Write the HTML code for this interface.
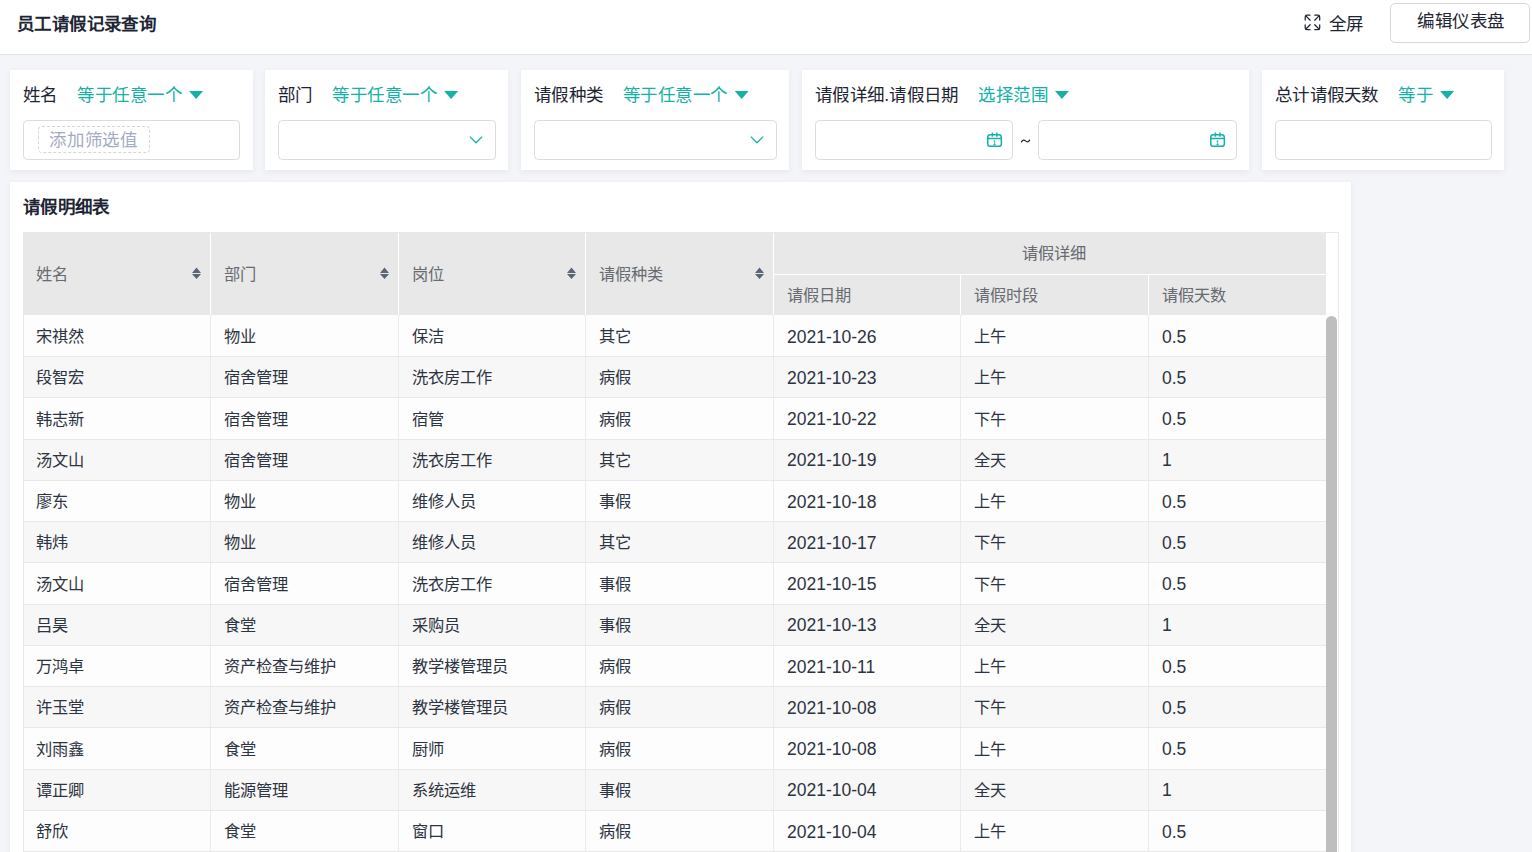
<!DOCTYPE html>
<html lang="zh-CN">
<head>
<meta charset="utf-8">
<style>
*{box-sizing:border-box;margin:0;padding:0}
html,body{width:1532px;height:852px;overflow:hidden}
body{background:#f4f5f9;font-family:"Liberation Sans",sans-serif;font-size:17.5px;color:#1f2533;position:relative}
.abs{position:absolute}
.t{position:absolute;white-space:nowrap;line-height:20px}
#hdr{left:0;top:0;width:1532px;height:55px;background:#fff;border-bottom:1px solid #e1e3e8}
#title{left:17px;top:13.5px;font-weight:bold;color:#1d2433;letter-spacing:0.4px}
#fs{left:1328.5px;top:14px;color:#1d2433;letter-spacing:0.8px}
#btn{left:1390px;top:3px;width:140px;height:40px;border:1px solid #d8d8da;border-radius:5px;background:#fff}
#btn span{position:absolute;left:26px;top:7px;line-height:20px;color:#1d2433;letter-spacing:0.5px}
.card{position:absolute;top:70px;height:100px;background:#fff;box-shadow:0 2px 6px rgba(40,50,90,0.07)}
.lab{position:absolute;left:13px;top:14.7px;line-height:20px;color:#1d2433;white-space:nowrap;letter-spacing:0.3px}
.op{color:#14b1a6;margin-left:19.5px;letter-spacing:0.55px}
.tri{display:inline-block;width:14px;height:8px;margin-left:6.7px;vertical-align:middle;position:relative;top:-1px;background:#14b1a6;clip-path:polygon(0 0,100% 0,50% 100%)}
.inp{position:absolute;top:50px;height:40px;border:1px solid #dadbdd;border-radius:4.5px;background:#fff}
#tcard{left:10px;top:182px;width:1341px;height:700px;background:#fff;box-shadow:0 2px 6px rgba(40,50,90,0.07)}
#ttl{left:13px;top:15px;font-weight:bold;color:#1d2433;letter-spacing:0.3px}
#tbl{position:absolute;left:23px;top:232px;width:1316px;height:640px;border:1px solid #e8e8e8;background:#fff}
.hc{position:absolute;background:#e8e8e8;color:#676a70;white-space:nowrap;font-size:16.25px}
.hc span{position:absolute;left:13px;line-height:20px}
.sort{position:absolute;width:9px;height:12px}
.row{position:absolute;left:0;width:1302px;height:41.25px;border-bottom:1px solid #e8e8e8}
.row.o{background:#fdfdfd}
.row.e{background:#f7f7f7}
.c{position:absolute;top:0;height:100%;line-height:20px;white-space:nowrap;border-left:1px solid #ebebeb;font-size:16.25px;color:#2c3341}
.n{font-size:17.5px}
</style>
</head>
<body>
<div id="hdr" class="abs">
  <div id="title" class="t">员工请假记录查询</div>
  <svg class="abs" style="left:1304px;top:14px" width="17" height="17" viewBox="0 0 17 17" fill="none" stroke="#1d2433" stroke-width="1.25" stroke-linecap="round" stroke-linejoin="round">
    <path d="M1.2 6V2.9Q1.2 1.2 2.9 1.2H6M1.6 1.6L6.2 6.2"/><path d="M10.8 1.2H14Q15.7 1.2 15.7 2.9V6M15.3 1.6L10.7 6.2"/><path d="M1.2 10.8V14Q1.2 15.7 2.9 15.7H6M1.6 15.3L6.2 10.7"/><path d="M15.7 10.8V14Q15.7 15.7 14 15.7H10.8M15.3 15.3L10.7 10.7"/>
  </svg>
  <div id="fs" class="t">全屏</div>
  <div id="btn" class="abs"><span>编辑仪表盘</span></div>
</div>

<div class="card" style="left:10px;width:243px">
  <div class="lab">姓名<span class="op">等于任意一个</span><i class="tri"></i></div>
  <div class="inp" style="left:13px;width:217px">
    <div class="abs" style="left:14px;top:5px;width:112px;height:27px;border:1px dashed #d5d6d9;border-radius:4px"></div>
    <div class="t" style="left:25px;top:9px;color:#a3acbf;letter-spacing:0.75px">添加筛选值</div>
  </div>
</div>
<div class="card" style="left:265px;width:243px">
  <div class="lab">部门<span class="op">等于任意一个</span><i class="tri"></i></div>
  <div class="inp" style="left:13px;width:218px">
    <svg class="abs" style="left:189px;top:13px" width="16" height="12" viewBox="0 0 16 12"><path d="M1.8 2.6l6.2 6.2 6.2-6.2" fill="none" stroke="#14b1a6" stroke-width="1.3"/></svg>
  </div>
</div>
<div class="card" style="left:521px;width:268px">
  <div class="lab">请假种类<span class="op">等于任意一个</span><i class="tri"></i></div>
  <div class="inp" style="left:13px;width:243px">
    <svg class="abs" style="left:214px;top:13px" width="16" height="12" viewBox="0 0 16 12"><path d="M1.8 2.6l6.2 6.2 6.2-6.2" fill="none" stroke="#14b1a6" stroke-width="1.3"/></svg>
  </div>
</div>
<div class="card" style="left:802px;width:447px">
  <div class="lab">请假详细.请假日期<span class="op">选择范围</span><i class="tri"></i></div>
  <div class="inp" style="left:13px;width:198px">
    <svg class="abs" style="left:170.5px;top:10.5px" width="17" height="18" viewBox="0 0 17 18" fill="none" stroke="#14b1a6" stroke-width="1.5"><rect x="0.75" y="2.75" width="13.6" height="11.6" rx="2.6"/><path d="M0.75 6.4h13.6M5.4 0.6v4.2M9.9 0.6v4.2"/><path d="M6.5 9.2l1.2-.6v4.2M6.2 12.8h2.8" stroke-width="0.9"/></svg>
  </div>
  <svg class="abs" style="left:218px;top:68px" width="11" height="6" viewBox="0 0 11 6"><path d="M1.5 3.9C2.6 1.8 4 1.6 5.5 2.9S8.4 4.2 9.6 2.1" fill="none" stroke="#1d2433" stroke-width="1.2" stroke-linecap="round"/></svg>
  <div class="inp" style="left:236px;width:199px">
    <svg class="abs" style="left:170.5px;top:10.5px" width="17" height="18" viewBox="0 0 17 18" fill="none" stroke="#14b1a6" stroke-width="1.5"><rect x="0.75" y="2.75" width="13.6" height="11.6" rx="2.6"/><path d="M0.75 6.4h13.6M5.4 0.6v4.2M9.9 0.6v4.2"/><path d="M6.5 9.2l1.2-.6v4.2M6.2 12.8h2.8" stroke-width="0.9"/></svg>
  </div>
</div>
<div class="card" style="left:1262px;width:242px">
  <div class="lab">总计请假天数<span class="op">等于</span><i class="tri"></i></div>
  <div class="inp" style="left:13px;width:217px"></div>
</div>

<div id="tcard" class="abs">
  <div id="ttl" class="t">请假明细表</div>
</div>
<div id="tbl">
<div class="hc" style="left:0px;top:0;width:186px;height:82px"><span style="top:31px;left:12px">姓名</span></div>
<svg class="sort" style="left:168px;top:34px" width="9" height="12" viewBox="0 0 9 12"><path d="M4.5 0.4L9 5.9H0z M0 7h9L4.5 12z" fill="#5a6577"/></svg>
<div class="hc" style="left:187px;top:0;width:187px;height:82px"><span style="top:31px;left:13px">部门</span></div>
<svg class="sort" style="left:356px;top:34px" width="9" height="12" viewBox="0 0 9 12"><path d="M4.5 0.4L9 5.9H0z M0 7h9L4.5 12z" fill="#5a6577"/></svg>
<div class="hc" style="left:375px;top:0;width:186px;height:82px"><span style="top:31px;left:13px">岗位</span></div>
<svg class="sort" style="left:543px;top:34px" width="9" height="12" viewBox="0 0 9 12"><path d="M4.5 0.4L9 5.9H0z M0 7h9L4.5 12z" fill="#5a6577"/></svg>
<div class="hc" style="left:562px;top:0;width:187px;height:82px"><span style="top:31px;left:13px">请假种类</span></div>
<svg class="sort" style="left:731px;top:34px" width="9" height="12" viewBox="0 0 9 12"><path d="M4.5 0.4L9 5.9H0z M0 7h9L4.5 12z" fill="#5a6577"/></svg>
<div class="hc" style="left:750px;top:0;width:552px;height:41px"><span style="left:0;width:559px;text-align:center;top:10px">请假详细</span></div>
<div class="hc" style="left:750px;top:42px;width:186px;height:40px"><span style="top:10px">请假日期</span></div>
<div class="hc" style="left:937px;top:42px;width:187px;height:40px"><span style="top:10px">请假时段</span></div>
<div class="hc" style="left:1125px;top:42px;width:177px;height:40px"><span style="top:10px">请假天数</span></div>
<div class="row o" style="top:82px;height:42px"><div class="c" style="border-left:0;left:0px;width:186px"><span style="position:absolute;left:12px;top:11px">宋祺然</span></div><div class="c" style="left:186px;width:188px"><span style="position:absolute;left:13px;top:11px">物业</span></div><div class="c" style="left:374px;width:187px"><span style="position:absolute;left:13px;top:11px">保洁</span></div><div class="c" style="left:561px;width:188px"><span style="position:absolute;left:13px;top:11px">其它</span></div><div class="c n" style="left:749px;width:187px"><span style="position:absolute;left:13px;top:12px">2021-10-26</span></div><div class="c" style="left:936px;width:188px"><span style="position:absolute;left:13px;top:11px">上午</span></div><div class="c n" style="left:1124px;width:178px"><span style="position:absolute;left:13px;top:12px">0.5</span></div></div>
<div class="row e" style="top:124px;height:41px"><div class="c" style="border-left:0;left:0px;width:186px"><span style="position:absolute;left:12px;top:10px">段智宏</span></div><div class="c" style="left:186px;width:188px"><span style="position:absolute;left:13px;top:10px">宿舍管理</span></div><div class="c" style="left:374px;width:187px"><span style="position:absolute;left:13px;top:10px">洗衣房工作</span></div><div class="c" style="left:561px;width:188px"><span style="position:absolute;left:13px;top:10px">病假</span></div><div class="c n" style="left:749px;width:187px"><span style="position:absolute;left:13px;top:11px">2021-10-23</span></div><div class="c" style="left:936px;width:188px"><span style="position:absolute;left:13px;top:10px">上午</span></div><div class="c n" style="left:1124px;width:178px"><span style="position:absolute;left:13px;top:11px">0.5</span></div></div>
<div class="row o" style="top:165px;height:42px"><div class="c" style="border-left:0;left:0px;width:186px"><span style="position:absolute;left:12px;top:11px">韩志新</span></div><div class="c" style="left:186px;width:188px"><span style="position:absolute;left:13px;top:11px">宿舍管理</span></div><div class="c" style="left:374px;width:187px"><span style="position:absolute;left:13px;top:11px">宿管</span></div><div class="c" style="left:561px;width:188px"><span style="position:absolute;left:13px;top:11px">病假</span></div><div class="c n" style="left:749px;width:187px"><span style="position:absolute;left:13px;top:11px">2021-10-22</span></div><div class="c" style="left:936px;width:188px"><span style="position:absolute;left:13px;top:11px">下午</span></div><div class="c n" style="left:1124px;width:178px"><span style="position:absolute;left:13px;top:11px">0.5</span></div></div>
<div class="row e" style="top:207px;height:41px"><div class="c" style="border-left:0;left:0px;width:186px"><span style="position:absolute;left:12px;top:10px">汤文山</span></div><div class="c" style="left:186px;width:188px"><span style="position:absolute;left:13px;top:10px">宿舍管理</span></div><div class="c" style="left:374px;width:187px"><span style="position:absolute;left:13px;top:10px">洗衣房工作</span></div><div class="c" style="left:561px;width:188px"><span style="position:absolute;left:13px;top:10px">其它</span></div><div class="c n" style="left:749px;width:187px"><span style="position:absolute;left:13px;top:10px">2021-10-19</span></div><div class="c" style="left:936px;width:188px"><span style="position:absolute;left:13px;top:10px">全天</span></div><div class="c n" style="left:1124px;width:178px"><span style="position:absolute;left:13px;top:10px">1</span></div></div>
<div class="row o" style="top:248px;height:41px"><div class="c" style="border-left:0;left:0px;width:186px"><span style="position:absolute;left:12px;top:10px">廖东</span></div><div class="c" style="left:186px;width:188px"><span style="position:absolute;left:13px;top:10px">物业</span></div><div class="c" style="left:374px;width:187px"><span style="position:absolute;left:13px;top:10px">维修人员</span></div><div class="c" style="left:561px;width:188px"><span style="position:absolute;left:13px;top:10px">事假</span></div><div class="c n" style="left:749px;width:187px"><span style="position:absolute;left:13px;top:11px">2021-10-18</span></div><div class="c" style="left:936px;width:188px"><span style="position:absolute;left:13px;top:10px">上午</span></div><div class="c n" style="left:1124px;width:178px"><span style="position:absolute;left:13px;top:11px">0.5</span></div></div>
<div class="row e" style="top:289px;height:41px"><div class="c" style="border-left:0;left:0px;width:186px"><span style="position:absolute;left:12px;top:10px">韩炜</span></div><div class="c" style="left:186px;width:188px"><span style="position:absolute;left:13px;top:10px">物业</span></div><div class="c" style="left:374px;width:187px"><span style="position:absolute;left:13px;top:10px">维修人员</span></div><div class="c" style="left:561px;width:188px"><span style="position:absolute;left:13px;top:10px">其它</span></div><div class="c n" style="left:749px;width:187px"><span style="position:absolute;left:13px;top:11px">2021-10-17</span></div><div class="c" style="left:936px;width:188px"><span style="position:absolute;left:13px;top:10px">下午</span></div><div class="c n" style="left:1124px;width:178px"><span style="position:absolute;left:13px;top:11px">0.5</span></div></div>
<div class="row o" style="top:330px;height:42px"><div class="c" style="border-left:0;left:0px;width:186px"><span style="position:absolute;left:12px;top:11px">汤文山</span></div><div class="c" style="left:186px;width:188px"><span style="position:absolute;left:13px;top:11px">宿舍管理</span></div><div class="c" style="left:374px;width:187px"><span style="position:absolute;left:13px;top:11px">洗衣房工作</span></div><div class="c" style="left:561px;width:188px"><span style="position:absolute;left:13px;top:11px">事假</span></div><div class="c n" style="left:749px;width:187px"><span style="position:absolute;left:13px;top:11px">2021-10-15</span></div><div class="c" style="left:936px;width:188px"><span style="position:absolute;left:13px;top:11px">下午</span></div><div class="c n" style="left:1124px;width:178px"><span style="position:absolute;left:13px;top:11px">0.5</span></div></div>
<div class="row e" style="top:372px;height:41px"><div class="c" style="border-left:0;left:0px;width:186px"><span style="position:absolute;left:12px;top:10px">吕昊</span></div><div class="c" style="left:186px;width:188px"><span style="position:absolute;left:13px;top:10px">食堂</span></div><div class="c" style="left:374px;width:187px"><span style="position:absolute;left:13px;top:10px">采购员</span></div><div class="c" style="left:561px;width:188px"><span style="position:absolute;left:13px;top:10px">事假</span></div><div class="c n" style="left:749px;width:187px"><span style="position:absolute;left:13px;top:10px">2021-10-13</span></div><div class="c" style="left:936px;width:188px"><span style="position:absolute;left:13px;top:10px">全天</span></div><div class="c n" style="left:1124px;width:178px"><span style="position:absolute;left:13px;top:10px">1</span></div></div>
<div class="row o" style="top:413px;height:41px"><div class="c" style="border-left:0;left:0px;width:186px"><span style="position:absolute;left:12px;top:10px">万鸿卓</span></div><div class="c" style="left:186px;width:188px"><span style="position:absolute;left:13px;top:10px">资产检查与维护</span></div><div class="c" style="left:374px;width:187px"><span style="position:absolute;left:13px;top:10px">教学楼管理员</span></div><div class="c" style="left:561px;width:188px"><span style="position:absolute;left:13px;top:10px">病假</span></div><div class="c n" style="left:749px;width:187px"><span style="position:absolute;left:13px;top:11px">2021-10-11</span></div><div class="c" style="left:936px;width:188px"><span style="position:absolute;left:13px;top:10px">上午</span></div><div class="c n" style="left:1124px;width:178px"><span style="position:absolute;left:13px;top:11px">0.5</span></div></div>
<div class="row e" style="top:454px;height:41px"><div class="c" style="border-left:0;left:0px;width:186px"><span style="position:absolute;left:12px;top:10px">许玉堂</span></div><div class="c" style="left:186px;width:188px"><span style="position:absolute;left:13px;top:10px">资产检查与维护</span></div><div class="c" style="left:374px;width:187px"><span style="position:absolute;left:13px;top:10px">教学楼管理员</span></div><div class="c" style="left:561px;width:188px"><span style="position:absolute;left:13px;top:10px">病假</span></div><div class="c n" style="left:749px;width:187px"><span style="position:absolute;left:13px;top:11px">2021-10-08</span></div><div class="c" style="left:936px;width:188px"><span style="position:absolute;left:13px;top:10px">下午</span></div><div class="c n" style="left:1124px;width:178px"><span style="position:absolute;left:13px;top:11px">0.5</span></div></div>
<div class="row o" style="top:495px;height:42px"><div class="c" style="border-left:0;left:0px;width:186px"><span style="position:absolute;left:12px;top:11px">刘雨鑫</span></div><div class="c" style="left:186px;width:188px"><span style="position:absolute;left:13px;top:11px">食堂</span></div><div class="c" style="left:374px;width:187px"><span style="position:absolute;left:13px;top:11px">厨师</span></div><div class="c" style="left:561px;width:188px"><span style="position:absolute;left:13px;top:11px">病假</span></div><div class="c n" style="left:749px;width:187px"><span style="position:absolute;left:13px;top:11px">2021-10-08</span></div><div class="c" style="left:936px;width:188px"><span style="position:absolute;left:13px;top:11px">上午</span></div><div class="c n" style="left:1124px;width:178px"><span style="position:absolute;left:13px;top:11px">0.5</span></div></div>
<div class="row e" style="top:537px;height:41px"><div class="c" style="border-left:0;left:0px;width:186px"><span style="position:absolute;left:12px;top:10px">谭正卿</span></div><div class="c" style="left:186px;width:188px"><span style="position:absolute;left:13px;top:10px">能源管理</span></div><div class="c" style="left:374px;width:187px"><span style="position:absolute;left:13px;top:10px">系统运维</span></div><div class="c" style="left:561px;width:188px"><span style="position:absolute;left:13px;top:10px">事假</span></div><div class="c n" style="left:749px;width:187px"><span style="position:absolute;left:13px;top:10px">2021-10-04</span></div><div class="c" style="left:936px;width:188px"><span style="position:absolute;left:13px;top:10px">全天</span></div><div class="c n" style="left:1124px;width:178px"><span style="position:absolute;left:13px;top:10px">1</span></div></div>
<div class="row o" style="top:578px;height:41px"><div class="c" style="border-left:0;left:0px;width:186px"><span style="position:absolute;left:12px;top:10px">舒欣</span></div><div class="c" style="left:186px;width:188px"><span style="position:absolute;left:13px;top:10px">食堂</span></div><div class="c" style="left:374px;width:187px"><span style="position:absolute;left:13px;top:10px">窗口</span></div><div class="c" style="left:561px;width:188px"><span style="position:absolute;left:13px;top:10px">病假</span></div><div class="c n" style="left:749px;width:187px"><span style="position:absolute;left:13px;top:11px">2021-10-04</span></div><div class="c" style="left:936px;width:188px"><span style="position:absolute;left:13px;top:10px">上午</span></div><div class="c n" style="left:1124px;width:178px"><span style="position:absolute;left:13px;top:11px">0.5</span></div></div>
<div class="row e" style="top:619px;height:41px"><div class="c" style="border-left:0;left:0px;width:186px"><span style="position:absolute;left:12px;top:10px">王某</span></div><div class="c" style="left:186px;width:188px"><span style="position:absolute;left:13px;top:10px">食堂</span></div><div class="c" style="left:374px;width:187px"><span style="position:absolute;left:13px;top:10px">窗口</span></div><div class="c" style="left:561px;width:188px"><span style="position:absolute;left:13px;top:10px">病假</span></div><div class="c n" style="left:749px;width:187px"><span style="position:absolute;left:13px;top:11px">2021-10-01</span></div><div class="c" style="left:936px;width:188px"><span style="position:absolute;left:13px;top:10px">上午</span></div><div class="c n" style="left:1124px;width:178px"><span style="position:absolute;left:13px;top:11px">0.5</span></div></div>
<div class="abs" style="left:1302px;top:83px;width:11px;height:700px;border-radius:5.5px;background:#bebebe"></div>
</div>
</body>
</html>
